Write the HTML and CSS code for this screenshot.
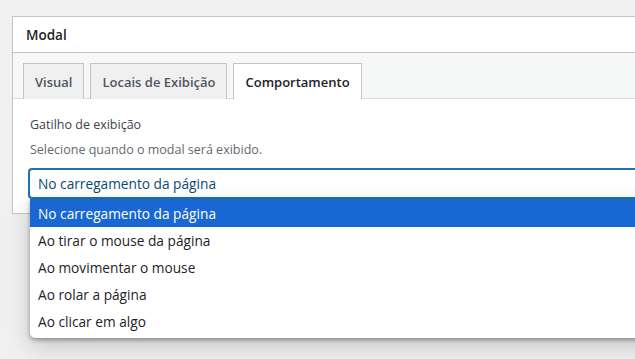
FILE: index.html
```html
<!DOCTYPE html>
<html lang="pt-BR">
<head>
  <meta charset="UTF-8" />
  <title>Modal</title>
  <link rel="stylesheet" href="styles.css">
</head>
<body>
  <div class="postbox">
    <div class="postbox-header">
      <h2>Modal</h2>
    </div>
    <div class="tabs">
      <span class="tab">Visual</span>
      <span class="tab">Locais de Exibição</span>
      <span class="tab active">Comportamento</span>
    </div>
    <div class="panel">
      <label class="field-label">Gatilho de exibição</label>
      <p class="description">Selecione quando o modal será exibido.</p>
      <div class="select-wrap">
        <div class="select">No carregamento da página</div>
        <ul class="dropdown">
          <li class="selected">No carregamento da página</li>
          <li>Ao tirar o mouse da página</li>
          <li>Ao movimentar o mouse</li>
          <li>Ao rolar a página</li>
          <li>Ao clicar em algo</li>
        </ul>
      </div>
    </div>
  </div>
</body>
</html>
```

FILE: styles.css
```css
html, body {
  margin: 0;
  height: 100%;
  overflow: hidden;
}
body {
  background: #f0f0f1;
  font-family: "Open Sans", "Noto Sans", sans-serif;
  color: #1d2327;
  padding: 16px 0 0 12px;
  box-sizing: border-box;
}
.postbox {
  width: 700px;
  background: #fff;
  border: 1px solid #c3c4c7;
}
.postbox-header {
  height: 35px;
  border-bottom: 1px solid #c3c4c7;
  display: flex;
  align-items: center;
  padding-left: 13px;
}
.postbox-header h2 {
  margin: 0;
  font-size: 13.5px;
  font-weight: 600;
  color: #1d2327;
}
.tabs {
  background: #f6f7f7;
  padding: 10px 0 0 10px;
  display: flex;
  gap: 6px;
  border-bottom: 1px solid #dcdcde;
  height: 35px;
}
.tab {
  display: flex;
  align-items: center;
  padding: 0 11px;
  border: 1px solid #c3c4c7;
  border-bottom: none;
  background: #f0f0f1;
  color: #50575e;
  font-size: 13px;
  font-weight: 600;
  margin-bottom: -1px;
  box-sizing: border-box;
  height: 36px;
}
.tab.active {
  background: #fff;
  color: #1d2327;
}
.panel {
  padding: 14px 0 14px 15px;
}
.field-label {
  display: block;
  font-size: 12.5px;
  font-weight: 500;
  color: #3c434a;
  margin: 3px 0 0 2px;
}
.description {
  margin: 8px 0 0 2px;
  font-size: 12.5px;
  color: #646970;
}
.select-wrap {
  position: relative;
  margin-top: 10px;
}
.select {
  height: 31px;
  box-sizing: border-box;
  border: 2px solid #2271b1;
  border-right: none;
  border-radius: 4px 0 0 4px;
  padding-left: 8px;
  display: flex;
  align-items: center;
  font-size: 13.7px;
  color: #0a4b78;
}
.dropdown {
  position: absolute;
  top: 31px;
  left: 2px;
  width: 700px;
  margin: 0;
  padding: 0 0 3px;
  list-style: none;
  background: #fff;
  border-radius: 0 0 0 5px;
  box-shadow: 0 2px 4px rgba(0, 0, 0, 0.35), 0 8px 24px rgba(0, 0, 0, 0.18);
}
.dropdown li {
  height: 27px;
  display: flex;
  align-items: center;
  padding-left: 8px;
  font-size: 13.7px;
  color: #1d2327;
}
.dropdown li.selected {
  background: #1967d2;
  color: #fff;
  height: 28px;
}
```
